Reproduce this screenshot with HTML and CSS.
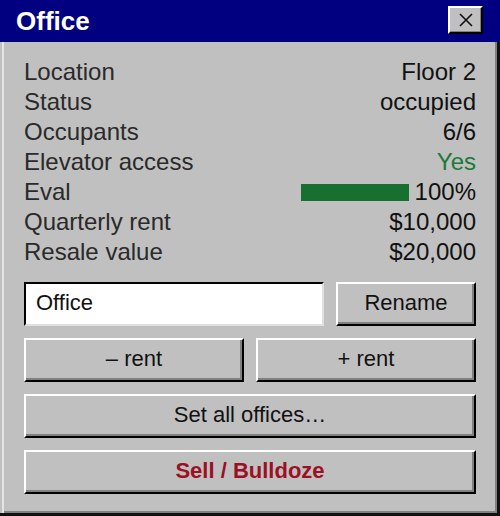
FILE: index.html
```html
<!DOCTYPE html>
<html lang="en">
<head>
    <meta charset="UTF-8">
    <title>Office</title>
    <link rel="stylesheet" href="styles.css">
</head>
<body>

<div class="window">
    <div class="titlebar">
        <span class="title">Office</span>
        <button class="close" aria-label="Close">
            <svg width="16" height="16" viewBox="0 0 16 16">
                <path d="M2 2 L14 14 M14 2 L2 14" stroke="#111" stroke-width="1.6" fill="none"/>
            </svg>
        </button>
    </div>

    <div class="panel">
        <!-- Room details -->
        <div class="info">
            <div class="row"><span class="label">Location</span><span class="value">Floor 2</span></div>
            <div class="row"><span class="label">Status</span><span class="value">occupied</span></div>
            <div class="row"><span class="label">Occupants</span><span class="value">6/6</span></div>
            <div class="row"><span class="label">Elevator access</span><span class="value good">Yes</span></div>
            <div class="row">
                <span class="label">Eval</span>
                <span class="value eval">
                    <span class="bar"><span class="fill" style="width: 100%;"></span></span>
                    100%
                </span>
            </div>
            <div class="row"><span class="label">Quarterly rent</span><span class="value">$10,000</span></div>
            <div class="row"><span class="label">Resale value</span><span class="value">$20,000</span></div>
        </div>

        <!-- Actions -->
        <div class="actions">
            <div class="line rename">
                <input type="text" class="name" value="Office">
                <button class="btn">Rename</button>
            </div>
            <div class="line split">
                <button class="btn">&ndash; rent</button>
                <button class="btn">+ rent</button>
            </div>
            <button class="btn">Set all offices&hellip;</button>
            <button class="btn danger">Sell / Bulldoze</button>
        </div>
    </div>
</div>

</body>
</html>
```

FILE: styles.css
```css
body {
    margin: 0;
    background-color: #111;
    font-family: "Liberation Sans", Arial, sans-serif;
    width: 500px;
    height: 516px;
    overflow: hidden;
}
.window {
    width: 500px;
}
.titlebar {
    background-color: #000080;
    height: 42px;
    display: flex;
    align-items: center;
    justify-content: space-between;
    padding: 0 17px 0 16px;
    box-sizing: border-box;
}
.title {
    color: #fff;
    font-weight: bold;
    font-size: 26px;
}
.close {
    width: 35px;
    height: 28px;
    padding: 0;
    margin-top: -2px;
    background-color: #c0c0c0;
    border: 2px solid;
    border-color: #fff #000 #000 #fff;
    box-shadow: inset -1px -1px #808080;
    display: flex;
    align-items: center;
    justify-content: center;
}
.panel {
    width: 497px;
    height: 471px;
    box-sizing: border-box;
    background-color: #c0c0c0;
    border-left: 2px solid #c0c0c0;
    box-shadow: inset 2px 0 #e4e4e4, inset -2px -2px #808080;
    padding: 15px 21px 0 22px;
}
.info {
    color: #2a2a2a;
    font-size: 24px;
}
.row {
    display: flex;
    justify-content: space-between;
    align-items: center;
    height: 30px;
}
.value {
    color: #111;
}
.value.good {
    color: #1b7a3a;
}
.eval {
    display: flex;
    align-items: center;
    gap: 6px;
}
.bar {
    width: 108px;
    height: 17px;
    display: block;
}
.fill {
    display: block;
    height: 100%;
    background-color: #17702f;
}
.actions {
    margin-top: 15px;
    display: flex;
    flex-direction: column;
    gap: 12px;
}
.line {
    display: flex;
    gap: 12px;
}
.split .btn {
    flex: 1;
}
.name {
    width: 300px;
    height: 44px;
    box-sizing: border-box;
    border: 2px solid;
    border-color: #000 #e0e0e0 #e0e0e0 #000;
    background-color: #fff;
    font-family: inherit;
    font-size: 22px;
    color: #111;
    padding: 0 10px 2px;
    outline: none;
}
.rename .btn {
    flex: 1;
}
.btn {
    height: 44px;
    box-sizing: border-box;
    background-color: #c0c0c0;
    border: 2px solid;
    border-color: #fff #000 #000 #fff;
    box-shadow: inset -2px -2px #808080;
    font-family: inherit;
    font-size: 22px;
    color: #111;
    padding: 0 0 3px;
    cursor: pointer;
}
.btn.danger {
    color: #9b1024;
    font-weight: bold;
}
```
